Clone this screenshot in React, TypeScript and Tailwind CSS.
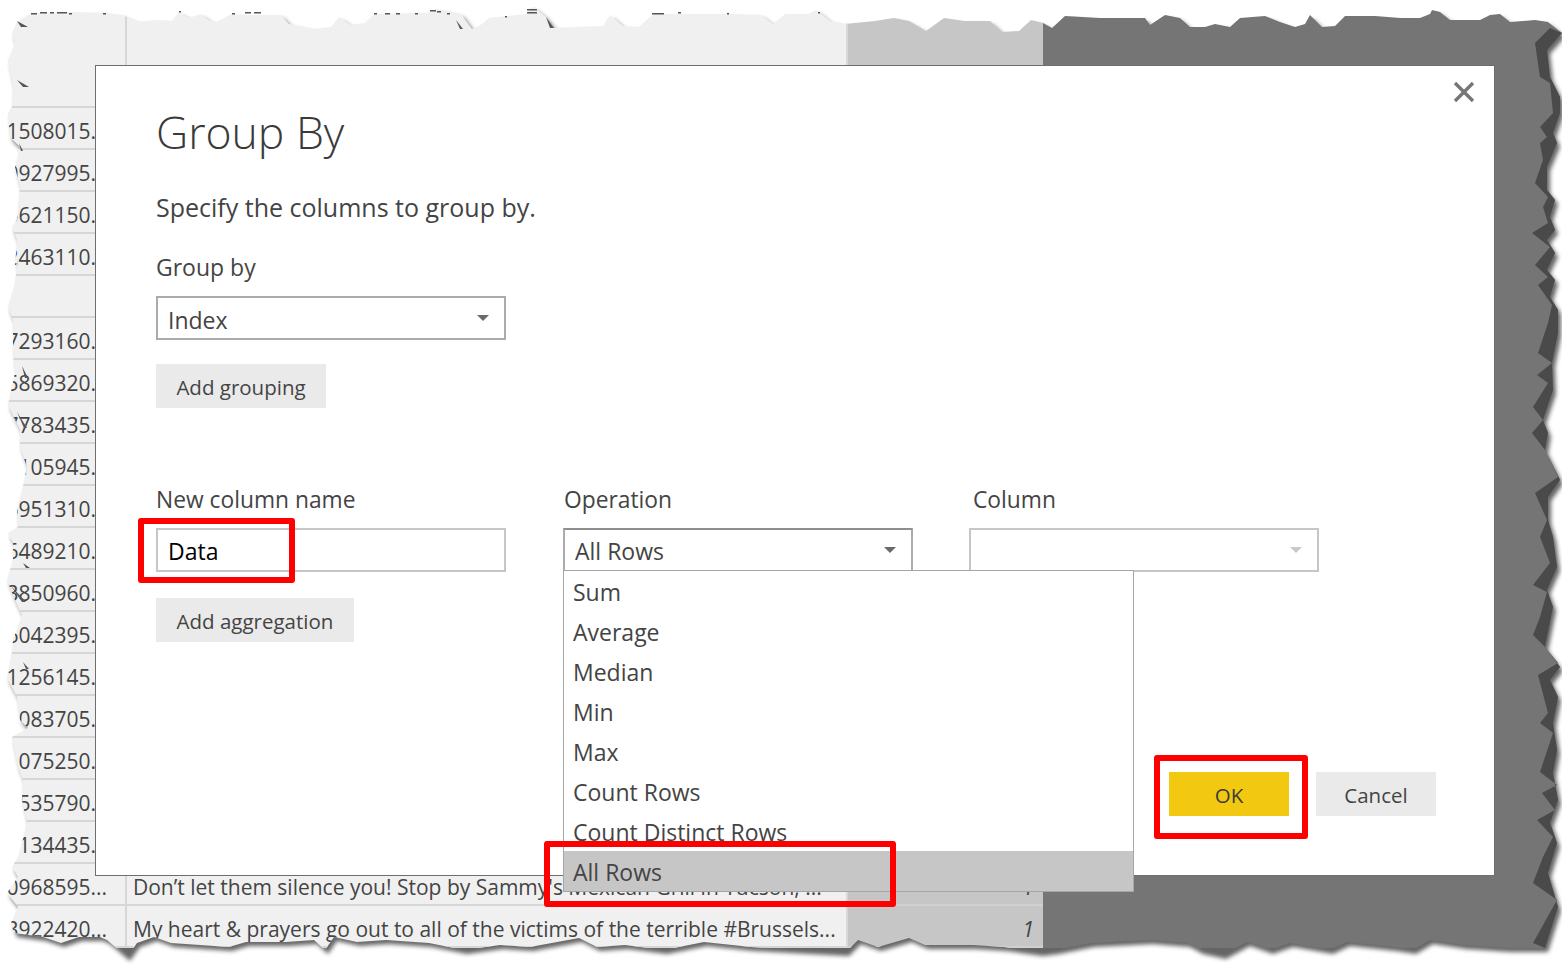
import React from "react";

const top = "28,15 31,14 69,12 103,13 122,15 138,22 155,20 172,21 179,12 189,18 201,14 210,21 217,22 231,14 248,15 281,15 289,24 313,29 331,27 339,17 351,25 365,23 374,14 427,13 437,9 461,14 472,29 482,24 489,18 527,14 530,8 534,7 546,17 554,28 603,26 610,15 623,26 639,27 653,14 727,14 761,15 773,24 785,14 809,14 816,10 830,21 845,24 875,21 894,18 909,21 926,31 944,18 964,21 990,21 1002,32 1019,31 1031,20 1043,23 1052,28 1065,16 1100,18 1145,18 1150,25 1165,15 1180,18 1190,27 1205,27 1215,24 1230,27 1240,18 1265,16 1280,22 1295,27 1305,24 1310,15 1322,27 1335,26 1345,16 1375,16 1400,18 1420,18 1430,14 1432,10 1440,12 1450,20 1480,20 1490,15 1500,14 1510,22 1535,20 1548,22";
const rightOuter = "1562,33 1547,50 1550,77 1560,97 1560,113 1553,133 1557,143 1547,167 1547,190 1555,200 1550,217 1555,230 1547,240 1555,253 1547,270 1555,280 1550,297 1558,310 1558,333 1552,363 1553,390 1543,420 1548,433 1545,450 1560,480 1548,497 1548,520 1553,537 1557,567 1547,590 1553,607 1545,647 1560,667 1550,680 1558,697 1553,723 1557,750 1553,773 1558,800 1550,823 1557,843 1548,873 1558,907 1545,948";
const rightInner = "1550,28 1535,43 1540,77 1550,83 1553,113 1540,127 1547,137 1540,143 1543,160 1535,183 1548,197 1543,207 1548,223 1532,233 1550,247 1535,265 1548,277 1538,285 1552,305 1548,323 1538,353 1552,363 1537,375 1548,383 1533,407 1543,420 1532,433 1545,450 1558,477 1535,493 1547,520 1540,537 1550,563 1533,585 1547,592 1540,617 1533,635 1545,647 1558,663 1538,675 1548,713 1540,723 1553,733 1540,772 1557,785 1542,793 1555,810 1537,820 1553,837 1543,857 1533,883 1557,900 1533,943";
const bottom = "1507,948 1463,945 1430,940 1413,950 1393,947 1347,942 1330,950 1290,943 1270,950 1247,942 1223,955 1200,950 1187,943 1150,940 1091,943 1056,950 1040,952 1004,947 973,945 925,945 909,938 878,947 858,940 846,952 807,950 751,947 704,942 664,950 625,945 597,947 579,938 530,947 500,945 464,950 429,943 386,940 357,942 334,937 325,950 314,940 286,942 246,942 229,947 200,945 171,943 154,937 137,943 127,957 107,940 100,937 79,937 61,943 43,937 14,933";
const left = "11,923 18,907 7,893 18,877 12,867 18,857 21,847 27,823 22,800 23,780 18,767 12,737 28,728 20,720 17,697 7,678 12,653 13,640 22,615 15,600 7,580 13,560 13,543 8,533 18,527 17,510 23,487 27,467 20,447 20,430 8,405 15,373 13,350 13,320 8,307 15,283 18,260 15,267 17,240 12,227 17,220 20,187 15,167 20,147 10,137 8,113 12,107 13,87 8,60 15,43 12,33 17,22";
const torn = [top, rightOuter, bottom, left].join(" ");
const band = rightInner + " " + rightOuter.split(" ").reverse().join(" ");

const specks = ["17,21 28,27 21,27", "17,80 29,87 23,87", "19,143 23,151 21,151", "22,366 28,378 25,378", "17,412 27,428 24,428", "23,563 30,568 26,568", "11,586 26,602 22,602", "23,662 29,669 26,669", "456,20 463,29 460,29", "546,17 554,28 550,28"];
const dashes: [number, number, number][] = [[31, 13, 6], [40, 12, 7], [50, 12, 4], [57, 12, 10], [69, 13, 3], [103, 13, 3], [179, 11, 2], [232, 13, 3], [245, 12, 6], [254, 12, 7], [374, 13, 3], [385, 13, 5], [396, 13, 4], [415, 13, 3], [430, 10, 6], [437, 11, 4], [447, 13, 3], [505, 16, 2], [527, 9, 10], [527, 12, 10], [652, 13, 12], [678, 12, 3], [727, 13, 2], [818, 12, 2]];

const rows = ["1508015", "0927995", "5621150", "2463110", "", "7293160", "5869320", "7783435", "2105945", "6951310", "6489210", "3850960", "6042395", "1256145", "1083705", "1075250", "5535790", "1134435", "0968595", "3922420"];
const options = ["Sum", "Average", "Median", "Min", "Max", "Count Rows", "Count Distinct Rows", "All Rows"];

function Caret({ light }: { light?: boolean }) {
  return (
    <svg width="12" height="6" viewBox="0 0 12 6" className={light ? "text-[#c8c8c8]" : "text-[#6a6a6a]"}>
      <path d="M0 0H12L6 6Z" fill="currentColor" />
    </svg>
  );
}

export default function App() {
  return (
    <div className="relative w-[1562px] h-[964px] overflow-hidden bg-white font-['Open_Sans',sans-serif] text-[#444444]">
      <svg className="absolute inset-0" width="1562" height="964">
        <defs>
          <clipPath id="torn" clipPathUnits="userSpaceOnUse">
            <polygon points={torn} />
          </clipPath>
          <filter id="soft" x="-5%" y="-5%" width="110%" height="110%">
            <feGaussianBlur stdDeviation="2" />
          </filter>
        </defs>
        <polygon points={torn} fill="#333333" opacity="0.75" filter="url(#soft)" transform="translate(3 4)" />
      </svg>

      <div className="relative w-[1562px] h-[964px] [clip-path:url(#torn)]">
        <div className="grid grid-cols-[127px_719px_197px_1fr] h-[108px]">
          <div className="bg-[#f0f0f0] border-r-2 border-b-2 border-[#d6d6d6]" />
          <div className="bg-[#f0f0f0] border-b-2 border-[#d6d6d6]" />
          <div className="bg-[#c6c6c6] border-l-2 border-b-2 border-l-[#d8d8d8] border-b-[#d0d0d0]" />
          <div className="bg-[#757575]" />
        </div>
        {rows.map((n, i) => (
          <div key={i} className="grid grid-cols-[127px_719px_197px_1fr] h-[42px] text-[21px] leading-[34px]">
            <div className="bg-[#f0f0f0] border-r-2 border-b-2 border-[#d6d6d6] text-right pr-[18px] pt-[6px] whitespace-nowrap overflow-hidden">{n ? n + "..." : ""}</div>
            <div className="bg-[#f0f0f0] border-b-2 border-[#d6d6d6] pl-[6px] pt-[6px] whitespace-nowrap overflow-hidden">
              {i === 18 ? "Don’t let them silence you! Stop by Sammy's Mexican Grill in Tucson, ..." : i === 19 ? "My heart & prayers go out to all of the victims of the terrible #Brussels..." : ""}
            </div>
            <div className="bg-[#c6c6c6] border-l-2 border-b-2 border-l-[#d8d8d8] border-b-[#d0d0d0] text-right pr-[9px] pt-[6px] italic">{i >= 18 ? "1" : ""}</div>
            <div className="bg-[#757575]" />
          </div>
        ))}
      </div>

      <svg className="absolute inset-0 pointer-events-none" width="1562" height="964">
        <polygon points={band} fill="#4a4a4a" />
        {specks.map((p) => (
          <polygon key={p} points={p} fill="#555555" />
        ))}
        {dashes.map(([x, y, w]) => (
          <rect key={x + "-" + y} x={x} y={y} width={w} height="1.5" fill="#555555" />
        ))}
      </svg>

      <div className="absolute left-[95px] top-[65px] w-[1400px] h-[811px] bg-white border border-[#6e6e6e] flex flex-col pl-[60px]">
        <svg className="absolute left-[1357px] top-[15px]" width="22" height="22" viewBox="0 0 22 22">
          <path d="M2 2L20 20M20 2L2 20" stroke="#777777" strokeWidth="3.4" fill="none" />
        </svg>

        <h1 className="mt-[34px] text-[44.5px] leading-[64px] font-light text-[#3a3a3a]">Group By</h1>
        <p className="mt-[27px] text-[25px] leading-[32px]">Specify the columns to group by.</p>
        <p className="mt-[28px] text-[23px] leading-[32px]">Group by</p>
        <div className="mt-[13px] w-[350px] h-[44px] border-2 border-[#ababab] flex items-center justify-between pl-[10px] pr-[15px] text-[23px] pt-[4px]">
          <span>Index</span>
          <span className="-mt-[4px]"><Caret /></span>
        </div>
        <button className="mt-[24px] w-[170px] h-[44px] bg-[#eaeaea] text-[20.5px] pt-[2px]">Add grouping</button>

        <div className="mt-[76px] flex text-[22.8px] leading-[32px]">
          <span className="w-[408px]">New column name</span>
          <span className="w-[409px]">Operation</span>
          <span>Column</span>
        </div>
        <div className="mt-[12px] flex">
          <div className="w-[350px] h-[44px] border-2 border-[#c6c6c6] flex items-center pl-[10px] text-[23px] text-black pt-[2px]">Data</div>
          <div className="ml-[57px] w-[350px] h-[44px] border-2 border-[#ababab] border-t-[#8e8e8e] flex items-center justify-between pl-[10px] pr-[15px] text-[23px] pt-[2px]">
            <span>All Rows</span>
            <span className="-mt-[2px]"><Caret /></span>
          </div>
          <div className="ml-[56px] w-[350px] h-[44px] border-2 border-[#c6c6c6] flex items-center justify-end pr-[15px]">
            <Caret light />
          </div>
        </div>
        <button className="mt-[26px] w-[198px] h-[44px] bg-[#eaeaea] text-[20.5px] pt-[2px]">Add aggregation</button>

        <div className="mt-auto mb-[59px] mr-[58px] flex justify-end gap-[27px] text-[20.5px]">
          <button className="w-[120px] h-[44px] bg-[#f2c811] text-[#3a3a3a] pt-[2px]">OK</button>
          <button className="w-[120px] h-[44px] bg-[#eaeaea] pt-[2px]">Cancel</button>
        </div>

        <ul className="absolute left-[467px] top-[504px] w-[571px] h-[322px] bg-white border border-[#a6a6a6] text-[23px]">
          {options.map((o) => (
            <li key={o} className={"h-[40px] pl-[9px] leading-[42px] " + (o === "All Rows" ? "bg-[#c6c6c6]" : "")}>{o}</li>
          ))}
        </ul>
      </div>

      <div className="absolute left-[138px] top-[518px] w-[157px] h-[65px] border-[6px] border-[#ff0000] rounded-[3px]" />
      <div className="absolute left-[544px] top-[841px] w-[352px] h-[66px] border-[6px] border-[#ff0000] rounded-[3px]" />
      <div className="absolute left-[1154px] top-[755px] w-[154px] h-[84px] border-[6px] border-[#ff0000] rounded-[3px]" />
    </div>
  );
}
